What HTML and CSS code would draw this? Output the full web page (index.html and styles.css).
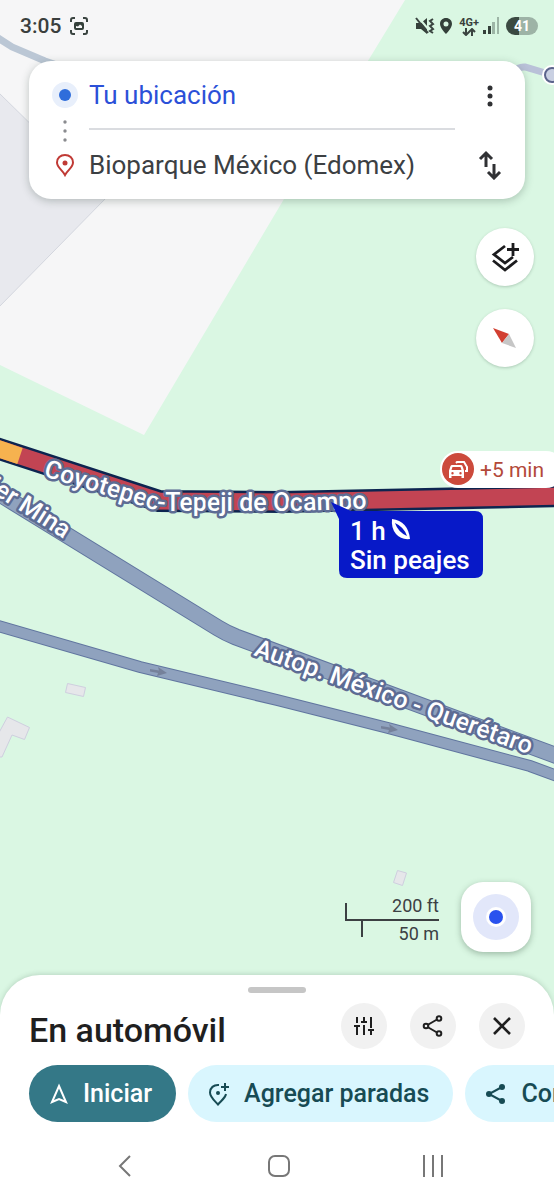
FILE: index.html
```html
<!DOCTYPE html>
<html lang="es">
<head>
<meta charset="utf-8">
<meta name="viewport" content="width=device-width, initial-scale=1">
<title>Ruta a Bioparque México</title>
<link rel="stylesheet" href="styles.css">
</head>
<body>
<div class="screen">
  <svg class="map" viewBox="0 0 554 1200" preserveAspectRatio="xMidYMid slice" role="img" aria-label="Mapa de la ruta">
    <defs>
      <path id="route-label" d="M43 476 L152 509 Q158 511 166 511 L290 511 L420 507"/>
      <path id="autop-label" d="M253 655 L564 767"/>
      <path id="mina-label" d="M-90 441 L64 539"/>
    </defs>
    <rect class="park" width="554" height="1200"/>
    <path class="ground" d="M0 0H405L284 199L144 435L0 365Z"/>
    <path class="block" d="M-2 92L106 198L-2 308Z"/>
    <path class="street" d="M-5 36L12 47L45 61L60 66"/>
    <path class="street violet" d="M505 78Q517 66 525 67L552 75"/>
    <circle class="node-halo" cx="552" cy="75" r="10"/>
    <circle class="node" cx="552" cy="75" r="7"/>

    <g class="building">
      <path d="M67.500 683.500L85.500 687.500L83.500 696.500L65.500 692.500Z"/>
      <path d="M7.500 717L29.500 727.500L24.500 739.500L12 735L2 757L-5 757L-5 740Z"/>
      <path d="M397.500 870.500L406.500 873L402.500 885.500L393.500 882.500Z"/>
    </g>

    <path class="road-edge small" d="M-5 625L140 667L277 700L388 728L530 766L560 777"/>
    <path class="road-fill small" d="M-5 625L140 667L277 700L388 728L530 766L560 777"/>
    <path class="road-edge" d="M-10 488L218 628Q226 633 236 637L560 757"/>
    <path class="road-fill" d="M-10 488L218 628Q226 633 236 637L560 757"/>
    <path class="arrow" d="M150 669L159 670.500L158 667L167 673L157 676L158 673L150 671.500Z"/>
    <path class="arrow" d="M381 726L390 727.500L389 724L398 730L388 733L389 730L381 728.500Z"/>

    <path class="route-edge" d="M-10 446L159 501L280 502L564 496"/>
    <path class="route-jam" d="M-10 446L159 501L280 502L564 496"/>
    <path class="route-slow" d="M-10 446L20 456"/>

    <g class="road-name">
      <text><textPath href="#route-label">Coyotepec-Tepeji de Ocampo</textPath></text>
      <text><textPath href="#autop-label">Autop. México - Querétaro</textPath></text>
      <text text-anchor="end"><textPath href="#mina-label" startOffset="100%">Javier Mina</textPath></text>
    </g>

    <g class="callout">
      <path d="M331 502L351 511H475Q483 511 483 519V570Q483 578 475 578H347Q339 578 339 570V519Z"/>
      <text x="350" y="540">1 h</text>
      <text x="350" y="569">Sin peajes</text>
      <path class="leaf" d="M392 519Q408 521 410 539Q401 540 396 534Q391 528 392 519Z"/>
      <path d="M395 523Q404 527 407 536Q398 532 395 523Z"/>
    </g>

    <g class="delay">
      <rect x="440" y="451" width="124" height="37" rx="18"/>
      <circle cx="458" cy="469" r="16"/>
      <path class="car-back" d="M456 463L457 462H464L467 467V471H465"/>
      <path class="car" fill-rule="evenodd" d="M452 465H461Q462 465 462.500 466L464 470.500V478H461.500V476H451.500V478H449V470.500L450.500 466Q451 465 452 465ZM452.500 467L451.500 470H461.500L460.500 467ZM452.500 472A1.200 1.200 0 1 0 452.500 474.400A1.200 1.200 0 1 0 452.500 472M460.500 472A1.200 1.200 0 1 0 460.500 474.400A1.200 1.200 0 1 0 460.500 472"/>
      <text x="480" y="477">+5 min</text>
    </g>
  </svg>

  <div class="overlay">
    <header class="status">
      <time class="clock">3:05</time>
      <svg class="capture" width="20" height="20" viewBox="0 0 20 20" aria-hidden="true">
        <path class="line" d="M2 6V4Q2 2 4 2H6M14 2H16Q18 2 18 4V6M18 14V16Q18 18 16 18H14M6 18H4Q2 18 2 16V14"/>
        <path class="solid" fill-rule="evenodd" d="M7 6H13Q15 6 15 8V12Q15 14 13 14H7Q5 14 5 12V8Q5 6 7 6ZM7 12H13V10L11 8.500L9 10.500L7 10Z"/>
      </svg>
      <svg class="mute" width="20" height="20" viewBox="0 0 20 20" aria-hidden="true">
        <path class="solid" d="M1 7H6L12 2V18L6 13H1Z"/>
        <path class="cut" d="M3 1L14 14"/>
        <path class="line" d="M1 2L13 17"/>
        <path class="line" d="M18 3L15 5L18 8L15 10L18 13L15 15L18 17"/>
      </svg>
      <svg width="14" height="18" viewBox="0 0 14 18" aria-hidden="true">
        <path class="solid" fill-rule="evenodd" d="M7 1C3.500 1 1 3.500 1 7C1 11 7 17 7 17C7 17 13 11 13 7C13 3.500 10.500 1 7 1ZM7 4.500A2.500 2.500 0 1 1 7 9.500A2.500 2.500 0 1 1 7 4.500"/>
      </svg>
      <span class="network"><span>4G+</span>
        <svg width="14" height="8" viewBox="0 0 14 8" aria-hidden="true"><path class="line" d="M4 0V7M1 4L4 7L7 4M10 8V1M7 4L10 1L13 4"/></svg>
      </span>
      <svg class="signal" width="17" height="18" viewBox="0 0 17 18" aria-hidden="true">
        <path class="solid" d="M0 13H3V17H0ZM5 9H8V17H5Z"/><path class="faint" d="M9 5H12V17H9ZM14 0H16V17H14Z"/>
      </svg>
      <span class="battery">41</span>
    </header>

    <form class="trip" aria-label="Origen y destino">
      <div class="markers" aria-hidden="true">
        <svg width="26" height="26" viewBox="0 0 26 26"><circle cx="13" cy="13" r="13" fill="#e8effb"/><circle cx="13" cy="13" r="6" fill="#2f6ddb"/></svg>
        <svg width="6" height="22" viewBox="0 0 6 22" fill="#8a8b8f"><circle cx="3" cy="2" r="1.700"/><circle cx="3" cy="11" r="1.700"/><circle cx="3" cy="20" r="1.700"/></svg>
        <svg width="20" height="24" viewBox="0 0 20 24"><path d="M10 2C5.500 2 2 5 2 9.500C2 14.500 7.500 17 10 22C12.500 17 18 14.500 18 9.500C18 5 14.500 2 10 2Z" fill="none" stroke="#c03a35" stroke-width="2"/><circle cx="10" cy="10" r="2.500" fill="#c03a35"/></svg>
      </div>
      <div class="fields">
        <input class="place origin" aria-label="Origen" value="Tu ubicación">
        <input class="place" aria-label="Destino" value="Bioparque México (Edomex)">
      </div>
      <div class="trip-actions">
        <button type="button" aria-label="Más opciones"><svg width="8" height="22" viewBox="0 0 8 22" fill="#303134"><circle cx="4" cy="3" r="2.500"/><circle cx="4" cy="11" r="2.500"/><circle cx="4" cy="19" r="2.500"/></svg></button>
        <button type="button" aria-label="Invertir origen y destino"><svg width="24" height="30" viewBox="0 0 24 30" fill="none" stroke="#303134" stroke-width="3"><path d="M8 17V3M2 9L8 3L14 9M16 14V28M10 22L16 28L22 22"/></svg></button>
      </div>
    </form>

    <div class="tools">
      <button class="round" type="button" aria-label="Capas"><svg width="30" height="30" viewBox="0 0 30 30" fill="none" stroke="#1c1c1e" stroke-width="2.800"><path d="M15 4L4 12.500L15 21L23 15M3 18.500L15 28L27 18.500M23 1V14M17 7.500H29"/></svg></button>
      <button class="round" type="button" aria-label="Brújula"><svg width="26" height="24" viewBox="0 0 26 24"><path d="M1 2L17 8L10 17Z" fill="#d23f31"/><path d="M17 8L24 22L10 17Z" fill="#c6c6c6"/></svg></button>
    </div>

    <div class="map-foot">
      <svg class="scale" width="95" height="56" viewBox="0 0 95 56" role="img" aria-label="Escala">
        <path d="M2 14V31H95M18 31V48"/>
        <text x="95" y="23" text-anchor="end">200 ft</text>
        <text x="95" y="51" text-anchor="end">50 m</text>
      </svg>
      <button class="locate" type="button" aria-label="Mi ubicación"><svg width="46" height="46" viewBox="0 0 46 46"><circle cx="23" cy="23" r="23" fill="#e2e7fa"/><circle cx="23" cy="23" r="10" fill="#fff"/><circle cx="23" cy="23" r="7" fill="#2a52ee"/></svg></button>
    </div>

    <section class="sheet">
      <div class="handle"></div>
      <div class="sheet-head">
        <h1>En automóvil</h1>
        <button type="button" aria-label="Opciones de ruta"><svg width="20" height="20" viewBox="0 0 20 20" fill="none" stroke="#1f1f1f" stroke-width="2"><path d="M3 1V7M0 10H6M3 10V19M10 1V5M7 6H13M10 9V19M17 1V12M14 14H20M17 14V19"/></svg></button>
        <button type="button" aria-label="Compartir ruta"><svg width="22" height="22" viewBox="0 0 22 22" fill="none" stroke="#1f1f1f" stroke-width="2"><path d="M5.500 10L15 4.500M5.500 12L15 17.500"/><circle cx="4" cy="11" r="2.300"/><circle cx="17" cy="3.500" r="2.300"/><circle cx="17" cy="18.500" r="2.300"/></svg></button>
        <button type="button" aria-label="Cerrar"><svg width="20" height="20" viewBox="0 0 20 20" fill="none" stroke="#1f1f1f" stroke-width="2.600"><path d="M2 2L18 18M18 2L2 18"/></svg></button>
      </div>
      <div class="chips">
        <button class="chip primary" type="button"><svg width="20" height="22" viewBox="0 0 20 22" fill="none" stroke="#fff" stroke-width="2"><path d="M10 3L17 19L10 16L3 19Z"/></svg>Iniciar</button>
        <button class="chip" type="button"><svg width="22" height="24" viewBox="0 0 22 24" fill="none" stroke="#174b54" stroke-width="2"><path d="M11 3C5.500 2.500 2 6 2 10.500C2 15 6 18 10 22.500C14 18 17.500 15.500 18 12M17 1V9M13 5H21"/><circle cx="10" cy="11" r="2" fill="#174b54" stroke="none"/></svg>Agregar paradas</button>
        <button class="chip" type="button"><svg width="22" height="22" viewBox="0 0 22 22" fill="#174b54"><path d="M17 4L4 11L17 18" fill="none" stroke="#174b54" stroke-width="2"/><circle cx="4" cy="11" r="3"/><circle cx="17" cy="4" r="3"/><circle cx="17" cy="18" r="3"/></svg>Compartir</button>
      </div>
      <nav class="system" aria-label="Sistema">
        <button type="button" aria-label="Atrás"><svg width="16" height="24" viewBox="0 0 16 24"><path d="M13 2L3 12L13 22"/></svg></button>
        <button type="button" aria-label="Inicio"><svg width="24" height="24" viewBox="0 0 24 24"><rect x="2" y="2" width="20" height="20" rx="6"/></svg></button>
        <button type="button" aria-label="Recientes"><svg width="24" height="24" viewBox="0 0 24 24"><path d="M3 1V23M12 1V23M21 1V23"/></svg></button>
      </nav>
    </section>
  </div>
</div>
</body>
</html>
```
FILE: styles.css
```css
* { box-sizing: border-box; }
body { margin: 0; font-family: Roboto, "Open Sans", sans-serif; color: #1f1f1f; }
button { border: 0; padding: 0; background: none; font: inherit; color: inherit; display: flex; align-items: center; justify-content: center; cursor: pointer; }
svg { flex: none; display: block; }

.screen { position: relative; min-height: 100vh; overflow: hidden; background: #daf7e3; }
.map { position: absolute; inset: 0; width: 100%; height: 100%; }
.overlay { position: relative; min-height: 100vh; display: flex; flex-direction: column; }

.park { fill: #daf7e3; }
.ground { fill: #f6f6f7; }
.block { fill: #e8e9ee; stroke: #d3d6de; stroke-width: 1; }
.street { fill: none; stroke: #bbc7d5; stroke-width: 7; }
.street.violet { stroke: #b9c1d8; }
.node-halo { fill: #fff; }
.node { fill: #c9d0e2; stroke: #5b648c; stroke-width: 2; }
.building path { fill: #e6e7ea; stroke: #cfcfdf; stroke-width: 1; }
.road-edge { fill: none; stroke: #60759f; stroke-width: 17; }
.road-fill { fill: none; stroke: #8fa2be; stroke-width: 15; }
.road-edge.small { stroke-width: 12; }
.road-fill.small { stroke-width: 10; }
.arrow { fill: #75819a; }
.route-edge { fill: none; stroke: #0d2550; stroke-width: 22; }
.route-jam { fill: none; stroke: #c24453; stroke-width: 17; }
.route-slow { fill: none; stroke: #f6b24f; stroke-width: 17; }
.road-name { font-size: 25px; font-weight: 500; fill: #fff; stroke: #5d6c94; stroke-width: 5; stroke-linejoin: round; paint-order: stroke; }
.callout { fill: #0719c8; font-size: 26px; font-weight: 500; }
.callout text, .callout .leaf { fill: #fff; }
.delay { fill: #fff; font-size: 21px; }
.delay circle { fill: #cc4a3c; }
.delay text { fill: #b3493a; }
.delay .car-back { fill: none; stroke: #fff; stroke-width: 2; }

.status { display: flex; align-items: center; height: 52px; padding: 0 16px 0 20px; color: #3a3f3d; }
.clock { font-size: 21px; font-weight: 500; }
.capture { margin-left: 8px; margin-right: auto; }
.status .line { fill: none; stroke: #3a4440; stroke-width: 2; }
.status .solid { fill: #34403a; }
.status .faint { fill: #9db5a6; }
.status .cut { stroke: #daf7e3; stroke-width: 2; }
.mute { margin-right: 4px; }
.network { display: flex; flex-direction: column; align-items: center; margin: 0 4px 0 6px; font-size: 11px; line-height: 11px; font-weight: 700; }
.signal { margin-right: 6px; }
.battery { width: 32px; height: 18px; border-radius: 9px; background: linear-gradient(90deg, #3b4a42 41%, #9db3a6 41%); color: #fff; font-size: 14px; line-height: 18px; font-weight: 700; text-align: center; }

.trip { display: grid; grid-template-columns: 60px 1fr 70px; margin: 9px 29px 0; background: #fff; border-radius: 22px; box-shadow: 0 2px 8px rgba(40, 60, 50, .28); }
.markers { display: flex; flex-direction: column; align-items: center; justify-content: space-between; padding: 21px 0 22px 12px; }
.fields, .trip-actions { display: grid; grid-template-rows: 69px 69px; }
.trip-actions button { height: 100%; }
.place { width: 100%; min-width: 0; border: 0; padding: 0; outline: 0; background: none; font: inherit; font-size: 26px; color: #3c4043; }
.place.origin { color: #2b50d8; border-bottom: 2px solid #dadce0; }

.tools { display: flex; flex-direction: column; align-items: flex-end; gap: 23px; padding: 29px 20px 0; }
.round { width: 58px; height: 58px; border-radius: 50%; background: #fff; box-shadow: 0 1px 3px rgba(40, 70, 50, .25); }

.map-foot { display: flex; align-items: center; justify-content: flex-end; gap: 22px; margin-top: auto; padding: 0 23px 23px; }
.scale path { fill: none; stroke: #3c4043; stroke-width: 2; }
.scale text { fill: #3c4043; font-size: 18px; }
.locate { width: 70px; height: 70px; border-radius: 22px; background: #fff; box-shadow: 0 2px 6px rgba(40, 70, 50, .35); }

.sheet { background: #fff; border-radius: 40px 40px 0 0; padding-top: 12px; box-shadow: 0 -1px 5px rgba(40, 70, 50, .18); }
.handle { width: 58px; height: 6px; margin: 0 auto 10px; border-radius: 3px; background: #c6c6c6; }
.sheet-head { display: flex; align-items: center; gap: 23px; padding: 0 29px; }
.sheet-head h1 { flex: 1; margin: 0; padding-top: 8px; font-size: 34px; line-height: 38px; font-weight: 500; }
.sheet-head button { width: 46px; height: 46px; border-radius: 50%; background: #f1f1f1; }
.chips { display: flex; gap: 12px; margin-top: 16px; padding-left: 29px; overflow: hidden; }
.chip { flex: none; gap: 14px; height: 57px; padding: 0 24px 0 20px; border-radius: 29px; background: #d9f6fe; color: #174b54; font-size: 25px; font-weight: 500; }
.chip.primary { background: #347887; color: #fff; }
.system { display: grid; grid-template-columns: repeat(3, 1fr); height: 68px; margin-top: 10px; padding: 0 44px 0 48px; }
.system svg { fill: none; stroke: #777; stroke-width: 2; }
```
